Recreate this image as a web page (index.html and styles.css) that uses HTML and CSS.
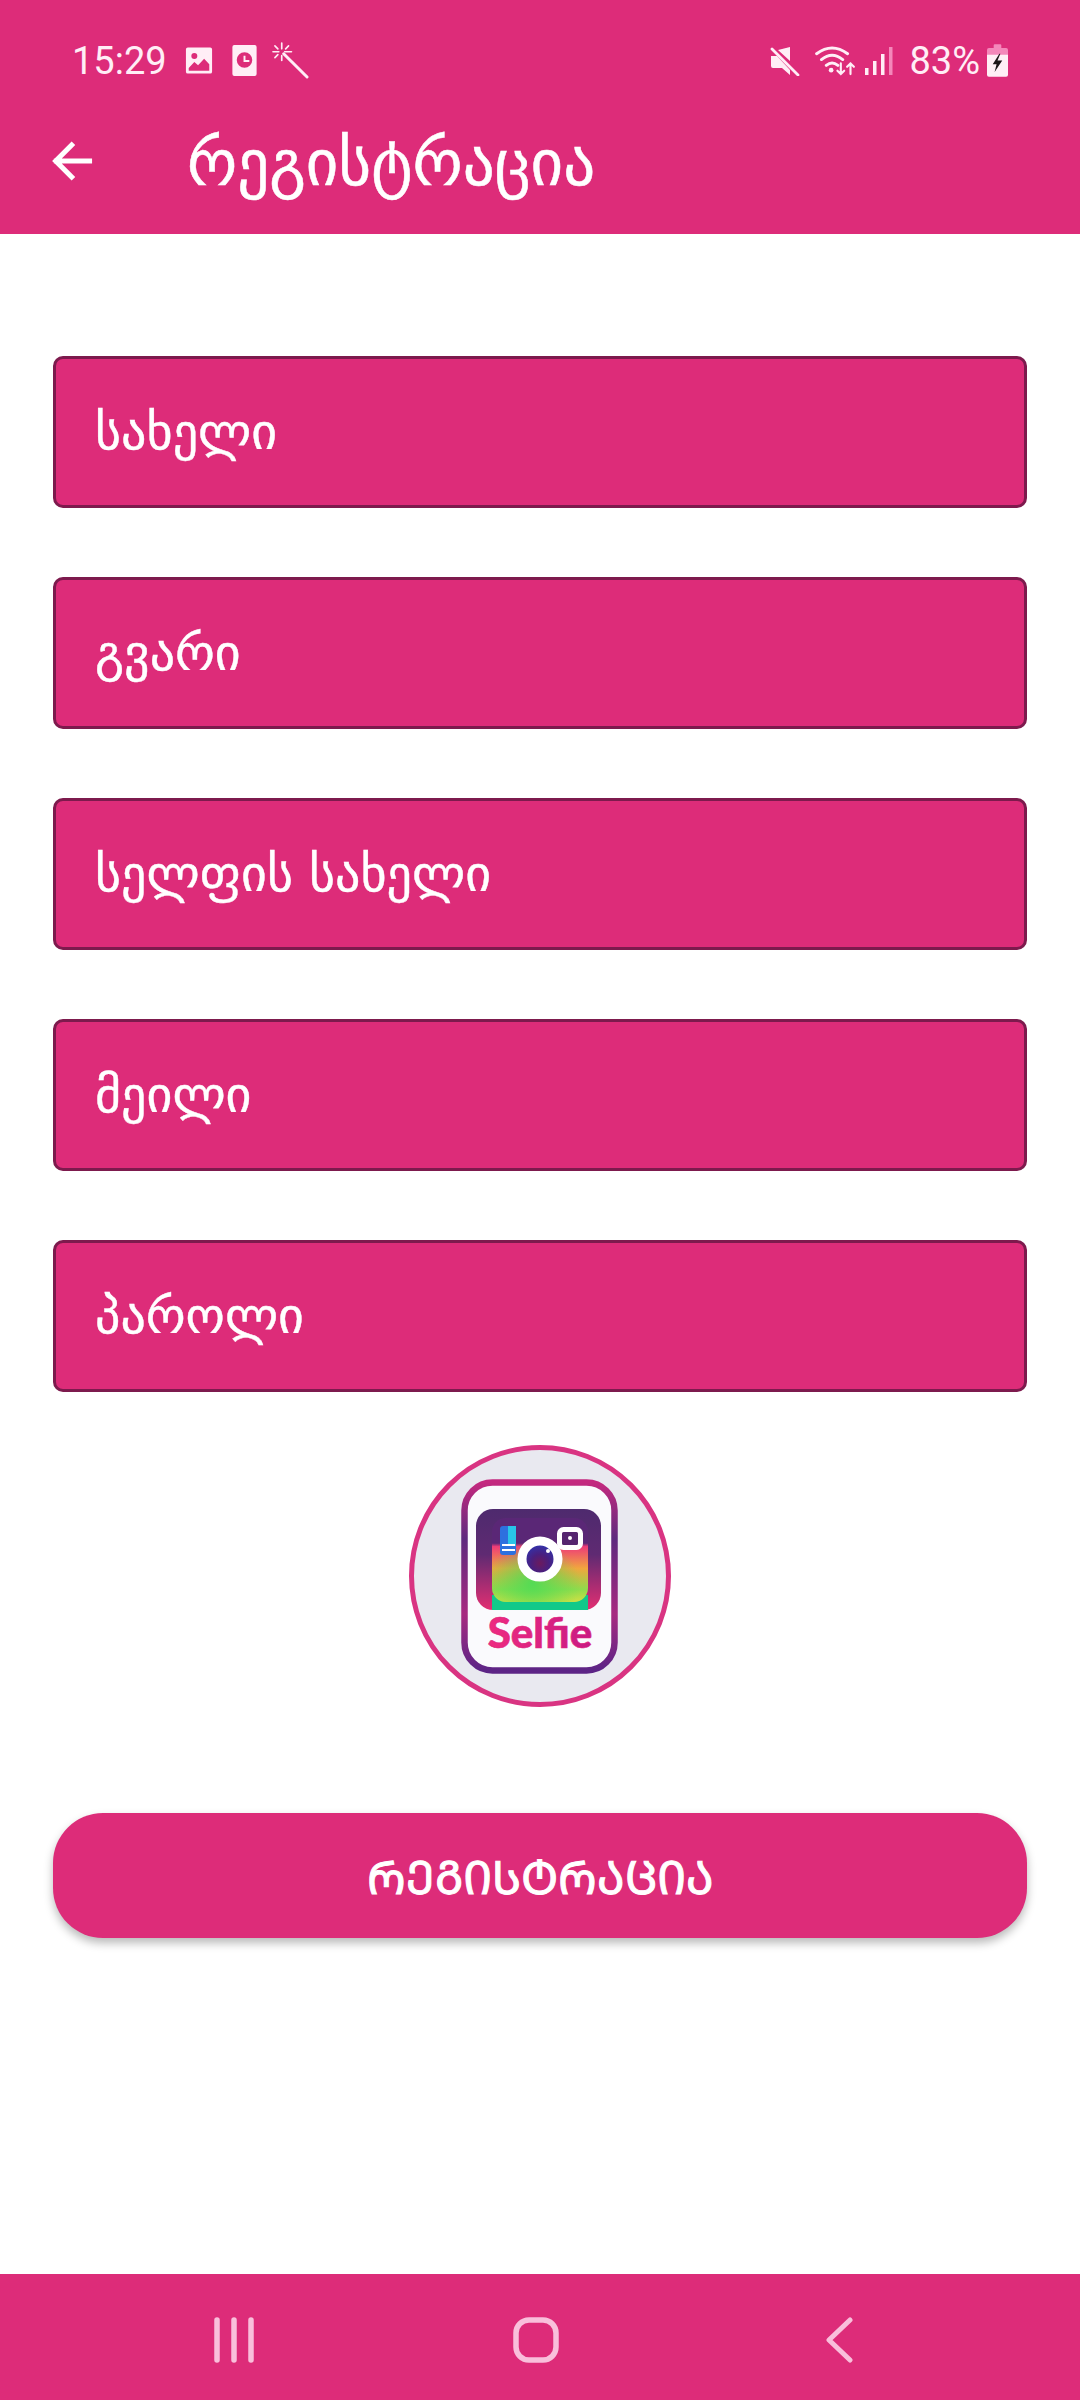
FILE: index.html
```html
<!DOCTYPE html>
<html lang="ka">
<head>
<meta charset="utf-8">
<title>რეგისტრაცია</title>
<link rel="stylesheet" href="styles.css">
</head>
<body>
<div class="screen">
  <header class="top">
    <div class="status">
      <div class="status-left">
        <span class="time">15:29</span>
        <svg class="ic-gallery" width="28" height="29" viewBox="0 0 30 30"><path fill="#ffeef6" fill-rule="evenodd" d="M3 1h24a2 2 0 0 1 2 2v24a2 2 0 0 1-2 2H3a2 2 0 0 1-2-2V3a2 2 0 0 1 2-2zM10 7a3.2 3.2 0 1 0 0 6.400a3.200 3.200 0 0 0 0-6.400zM4 23v3h22v-7l-5.500-6-6.500 7-4-3.500z"/></svg>
        <svg class="ic-clock" width="25" height="31" viewBox="0 0 25 32"><path fill="#ffeef6" fill-rule="evenodd" d="M2 0h21a2 2 0 0 1 2 2v28a2 2 0 0 1-2 2H2a2 2 0 0 1-2-2V2a2 2 0 0 1 2-2zM12.500 7.500a8 8 0 1 0 0 16a8 8 0 0 0 0-16zM11.500 11h2v4.500h4v2h-6z"/></svg>
        <svg class="ic-wand" width="37" height="37" viewBox="0 0 38 38"><path stroke="#ffeef6" fill="none" stroke-linecap="round" d="M12 12l24 24" stroke-width="3"/><path stroke="#ffeef6" fill="none" stroke-width="1.700" stroke-linecap="round" d="M10 1v6M10 14v5M1 10h6M13 10h7M3 4l3 3M17 4l-3 3M3 16l3-3"/></svg>
      </div>
      <div class="status-right">
        <svg class="ic-mute" width="30" height="30" viewBox="0 0 30 30"><path fill="#ffeef6" d="M20 1v14L8 4zM1 10h6l13 14v5l-8-7H3q-2 0-2-2z"/><path stroke="#ffeef6" stroke-width="2.800" stroke-linecap="round" d="M2 3l26 26"/></svg>
        <svg class="ic-wifi" width="42" height="31" viewBox="0 0 42 32"><g fill="none" stroke="#ffeef6" stroke-width="3" stroke-linecap="round"><path d="M2 9q16-12 32 0M7 15q11-9 22 0M12 21q6-5 12 0"/><path d="M27 19v11m-3.500-3.500l3.500 3.500 3.500-3.500M37 30V19m-3.500 3.500l3.500-3.500 3.500 3.500" stroke-width="2.200"/></g><circle cx="17" cy="26" r="2.400" fill="#ffeef6"/></svg>
        <svg class="ic-signal" width="28" height="30" viewBox="0 0 28 30"><g fill="#ffeef6"><rect x="0" y="22" width="3.500" height="7"/><rect x="8" y="15" width="3.500" height="14"/><rect x="16" y="8" width="3.500" height="21"/></g><rect x="24" y="1" width="3.500" height="28" fill="#f487ba"/></svg>
        <span class="pct">83%</span>
        <svg class="ic-batt" width="21" height="33" viewBox="0 0 22 34"><path fill="#f487ba" d="M7 1q0-1 1-1h6q1 0 1 1v3h5q2 0 2 2v7H0V6q0-2 2-2h5z"/><path fill="#ffeef6" d="M0 11h22v21q0 2-2 2H2q-2 0-2-2z"/><path fill="#1c1418" d="M13 10l-7 11h4l-2 8 8-12h-5l3-7z"/></svg>
      </div>
    </div>
    <div class="toolbar">
      <svg class="ic-back" width="41" height="42" viewBox="0 0 44 42"><path fill="none" stroke="#fff" stroke-width="5.500" d="M2 21h41M23 2L4 21l19 19"/></svg>
      <h1 class="title">რეგისტრაცია</h1>
    </div>
  </header>
  <main class="form">
    <div class="field">სახელი</div>
    <div class="field">გვარი</div>
    <div class="field">სელფის სახელი</div>
    <div class="field">მეილი</div>
    <div class="field">პაროლი</div>
    <div class="logo">
      <svg width="262" height="262" viewBox="0 0 262 262">
        <defs>
          <linearGradient id="frame" x1="0" y1="0" x2="0" y2="1"><stop offset="0" stop-color="#c4297f"/><stop offset=".3" stop-color="#5e2a7e"/><stop offset=".7" stop-color="#a72a80"/><stop offset="1" stop-color="#5c2486"/></linearGradient>
          <linearGradient id="dark" x1="0" y1="0" x2="0" y2="1"><stop offset="0" stop-color="#4e2a6e"/><stop offset=".45" stop-color="#5f2a72"/><stop offset="1" stop-color="#e32f72"/></linearGradient>
          <linearGradient id="cam" x1="0" y1="0" x2="0" y2="1"><stop offset="0" stop-color="#5a2776"/><stop offset=".3" stop-color="#5a2776"/><stop offset=".34" stop-color="#ee3c78"/><stop offset=".6" stop-color="#f1a63e"/><stop offset=".85" stop-color="#8fdc4c"/><stop offset="1" stop-color="#cfe044"/></linearGradient>
          <radialGradient id="glow" cx=".42" cy=".78" r=".5"><stop offset="0" stop-color="#4fdc55" stop-opacity=".95"/><stop offset="1" stop-color="#4fdc55" stop-opacity="0"/></radialGradient>
          <linearGradient id="word" x1="0" y1="0" x2="1" y2="0"><stop offset="0" stop-color="#ee2b80"/><stop offset="1" stop-color="#c81a83"/></linearGradient>
          <radialGradient id="lens" cx=".5" cy=".62" r=".55"><stop offset="0" stop-color="#6b1a5e"/><stop offset=".45" stop-color="#4a1f7e"/><stop offset="1" stop-color="#2f35b0"/></radialGradient>
        </defs>
        <circle cx="131" cy="131" r="128.500" fill="#e9e9f0" stroke="#d93482" stroke-width="5"/>
        <rect x="55.500" y="37.500" width="150" height="188" rx="28" fill="#fafafd" stroke="url(#frame)" stroke-width="6.500"/>
        <rect x="67" y="64" width="125" height="101" rx="17" fill="url(#dark)"/>
        <path d="M83 150h96v15H83z" fill="#12c98a"/>
        <rect x="83" y="73" width="96" height="84" rx="14" fill="url(#cam)"/>
        <rect x="83" y="73" width="96" height="84" rx="14" fill="url(#glow)"/>
        <rect x="91" y="81" width="16" height="29" rx="3" fill="#2d70df"/>
        <rect x="99" y="81" width="8" height="20" fill="#29c4e8"/>
        <path d="M93 100h13M93 105h13" stroke="#fff" stroke-width="2"/>
        <rect x="150.500" y="84.500" width="21" height="18" rx="4" fill="#55256f" stroke="#fff" stroke-width="5"/>
        <circle cx="161" cy="93" r="2" fill="#fff"/>
        <circle cx="131" cy="114" r="18" fill="url(#lens)" stroke="#fff" stroke-width="9"/>
        <circle cx="139" cy="106" r="2" fill="#fff"/>
        <text class="logo-word" x="131" y="203" text-anchor="middle" fill="url(#word)">Selfie</text>
      </svg>
    </div>
    <div class="submit">ᲠᲔᲒᲘᲡᲢᲠᲐᲪᲘᲐ</div>
  </main>
  <nav class="navbar">
    <svg class="nav-recent" width="42" height="46" viewBox="0 0 42 46"><g stroke="#f9bfdb" stroke-width="5.500" stroke-linecap="round"><path d="M4 3v40M21 3v40M38 3v40"/></g></svg>
    <svg class="nav-home" width="46" height="46" viewBox="0 0 46 46"><rect x="3" y="3" width="40" height="40" rx="13" fill="none" stroke="#f9bfdb" stroke-width="5.500"/></svg>
    <svg class="nav-back" width="28" height="46" viewBox="0 0 28 46"><path fill="none" stroke="#f9bfdb" stroke-width="5" stroke-linecap="round" stroke-linejoin="round" d="M25 3L4 23l21 20"/></svg>
  </nav>
</div>
</body>
</html>
```
FILE: styles.css
```css
* { box-sizing: border-box; }
html, body { margin: 0; padding: 0; background: #fff; }
body { font-family: "DejaVu Sans", "Noto Sans", sans-serif; }
.screen { width: 1080px; height: 2400px; display: flex; flex-direction: column; overflow: hidden; }
.top { height: 234px; background: #dd2c79; color: #fff; flex: none; }
.status { height: 121px; padding: 0 72px 0 72px; display: flex; justify-content: space-between; align-items: center; }
.status-left, .status-right { display: flex; align-items: center; }
.time { font: 38px Roboto, sans-serif; color: #ffeef6; margin-right: 18px; }
.ic-gallery { margin-right: 19px; }
.ic-clock { margin-right: 15px; }
.ic-wifi { margin-left: 14px; }
.ic-signal { margin-left: 9px; }
.pct { font: 38px Roboto, sans-serif; color: #ffeef6; margin: 0 7px 0 16px; }
.toolbar { height: 84px; padding-left: 52px; display: flex; align-items: center; }
.ic-back { flex: none; margin-top: -4px; }
.title { margin: 0 0 0 94px; font-size: 63px; font-weight: 400; line-height: 1; color: #fff; -webkit-text-stroke: .5px #fff; }
.form { flex: 1; padding: 122px 53px 0; display: flex; flex-direction: column; }
.field { height: 152px; margin-bottom: 69px; padding-left: 39px; display: flex; align-items: center; background: #dd2c79; border: 3px solid #7d1a4d; border-radius: 10px; font-size: 50px; color: #fff; -webkit-text-stroke: .4px #fff; }
.field:nth-child(5) { margin-bottom: 0; }
.logo { height: 262px; margin-top: 53px; display: flex; justify-content: center; }
.logo svg { display: block; }
.logo-word { font: 900 42px "Lato", sans-serif; stroke: #e0267f; stroke-width: .6px; }
.submit { height: 125px; margin-top: 106px; border-radius: 50px; background: #dd2c79; color: #fff; display: flex; justify-content: center; align-items: center; font-size: 46px; -webkit-text-stroke: 1px #fff; box-shadow: 0 5px 10px rgba(0,0,0,.28); }
.navbar { height: 126px; flex: none; background: #dd2c79; display: flex; align-items: center; padding: 6px 0 0 213px; }
.nav-home { margin-left: 258px; }
.nav-back { margin-left: 266px; }
```
